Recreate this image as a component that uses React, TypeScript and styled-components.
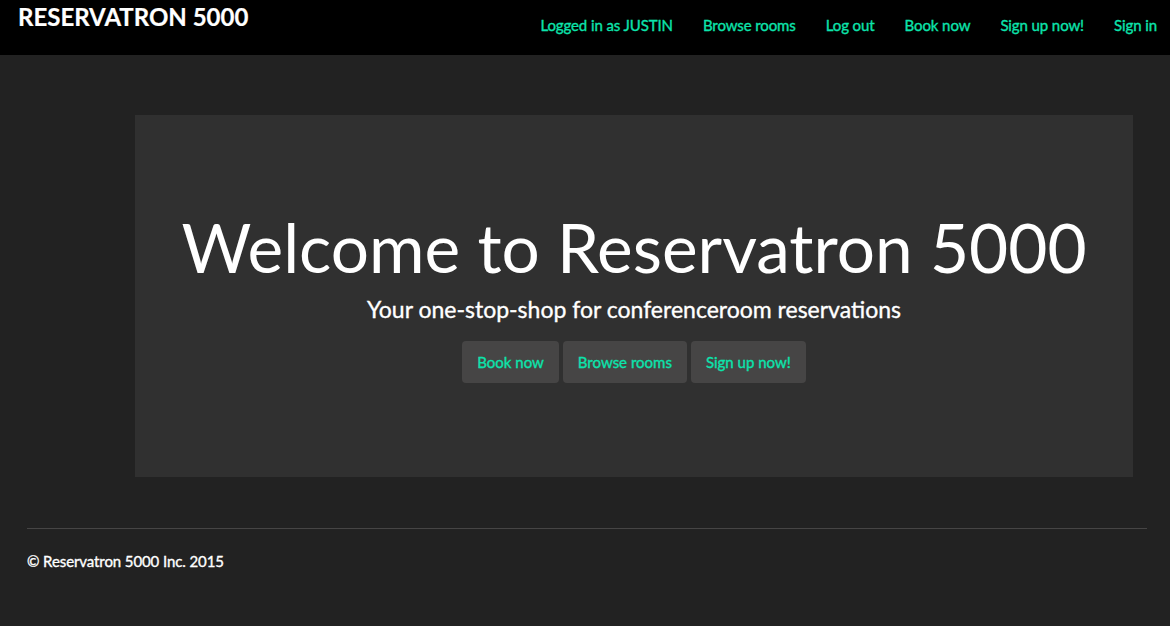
import React from "react";
import styled, { createGlobalStyle } from "styled-components";

const GlobalStyle = createGlobalStyle`
  html, body {
    margin: 0;
    padding: 0;
    background: #222222;
    font-family: Lato, "Open Sans", sans-serif;
    font-size: 15px;
    color: #ffffff;
  }
`;

const navLinks = [
  "Logged in as JUSTIN",
  "Browse rooms",
  "Log out",
  "Book now",
  "Sign up now!",
  "Sign in",
];

const heroButtons = ["Book now", "Browse rooms", "Sign up now!"];

export default function App() {
  return (
    <>
      <GlobalStyle />
      <Navbar>
        <Brand href="#">RESERVATRON 5000</Brand>
        <NavList>
          {navLinks.map((label) => (
            <NavItem key={label}>
              <NavLink href="#">{label}</NavLink>
            </NavItem>
          ))}
        </NavList>
      </Navbar>
      <Main>
        <Jumbotron>
          <Heading>Welcome to Reservatron 5000</Heading>
          <Lead>Your one-stop-shop for conferenceroom reservations</Lead>
          <ButtonRow>
            {heroButtons.map((label) => (
              <Button key={label} href="#">
                {label}
              </Button>
            ))}
          </ButtonRow>
        </Jumbotron>
      </Main>
      <Footer>
        <Rule />
        <Copy>© Reservatron 5000 Inc. 2015</Copy>
      </Footer>
    </>
  );
}

const Navbar = styled.nav`
  display: flex;
  justify-content: space-between;
  align-items: flex-start;
  height: 55px;
  background: #000000;
`;

const Brand = styled.a`
  padding: 2px 0 0 18px;
  font-size: 24px;
  font-weight: 700;
  line-height: 30px;
  color: #ffffff;
  text-decoration: none;
  -webkit-text-stroke: 0.2px currentColor;
`;

const NavList = styled.ul`
  display: flex;
  margin: 0;
  padding: 0;
  list-style: none;
`;

const NavItem = styled.li`
  display: block;

  &:last-child a {
    padding-right: 13px;
  }
`;

const NavLink = styled.a`
  display: block;
  padding: 15px;
  font-size: 15px;
  line-height: 21px;
  letter-spacing: -0.1px;
  color: #0ce3ac;
  text-decoration: none;
  -webkit-text-stroke: 0.35px currentColor;
`;

const Main = styled.main`
  padding: 60px 37px 0 135px;
`;

const Jumbotron = styled.section`
  display: flex;
  flex-direction: column;
  align-items: center;
  width: 998px;
  height: 362px;
  box-sizing: border-box;
  padding-top: 95px;
  background: #303030;
`;

const Heading = styled.h1`
  margin: 0;
  font-size: 67.5px;
  font-weight: 400;
  line-height: 74px;
  color: #ffffff;
`;

const Lead = styled.p`
  margin: 10px 0 0;
  font-size: 23px;
  line-height: 31px;
  font-weight: 400;
  color: #ffffff;
  -webkit-text-stroke: 0.35px currentColor;
`;

const ButtonRow = styled.div`
  display: flex;
  gap: 4px;
  margin-top: 16px;
`;

const Button = styled.a`
  display: block;
  padding: 10px 15px;
  font-size: 15px;
  line-height: 22px;
  color: #0ce3ac;
  background: #464545;
  border-radius: 4px;
  text-decoration: none;
  -webkit-text-stroke: 0.35px currentColor;
`;

const Footer = styled.footer`
  padding: 51px 23px 0 27px;
`;

const Rule = styled.hr`
  margin: 0;
  border: 0;
  border-top: 1px solid #464545;
`;

const Copy = styled.p`
  margin: 22px 0 0;
  font-size: 15px;
  line-height: 21px;
  letter-spacing: -0.1px;
  color: #ffffff;
  -webkit-text-stroke: 0.35px currentColor;
`;
